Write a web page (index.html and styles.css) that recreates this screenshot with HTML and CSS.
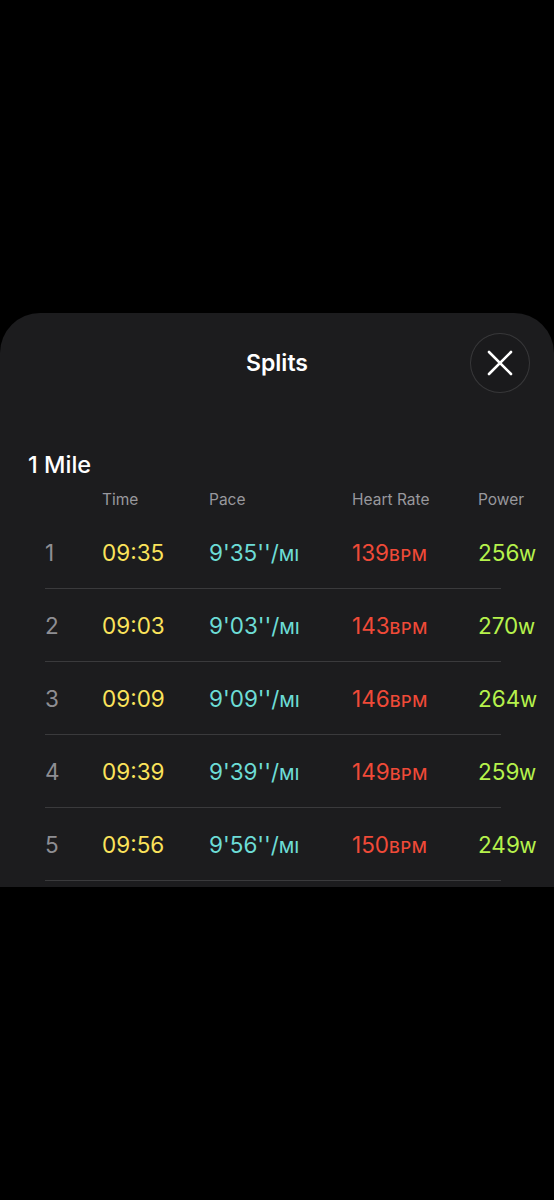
FILE: index.html
```html
<!DOCTYPE html>
<html lang="en">
<head>
  <title>Splits</title>
  <meta charset="UTF-8">
  <meta name="viewport" content="width=device-width, initial-scale=1">
  <link rel="stylesheet" href="styles.css">
</head>
<body>

  <div class="backdrop"></div>

  <div class="sheet">
    <div class="sheet-header">
      <span></span>
      <h1>Splits</h1>
      <button class="close-btn" aria-label="Close">
        <svg width="26" height="26" viewBox="0 0 26 26">
          <path d="M2 2 L24 24 M24 2 L2 24" stroke="#fff" stroke-width="2.6" stroke-linecap="round" fill="none"/>
        </svg>
      </button>
    </div>

    <h2 class="split-title">1 Mile</h2>

    <div class="splits">
      <div class="split-row head">
        <span></span>
        <span>Time</span>
        <span>Pace</span>
        <span>Heart Rate</span>
        <span>Power</span>
      </div>

      <div class="split-row">
        <span class="idx">1</span>
        <span class="time">09:35</span>
        <span class="pace">9'35''/<small>MI</small></span>
        <span class="hr">139<small>BPM</small></span>
        <span class="power">256<small>W</small></span>
      </div>
      <div class="split-row">
        <span class="idx">2</span>
        <span class="time">09:03</span>
        <span class="pace">9'03''/<small>MI</small></span>
        <span class="hr">143<small>BPM</small></span>
        <span class="power">270<small>W</small></span>
      </div>
      <div class="split-row">
        <span class="idx">3</span>
        <span class="time">09:09</span>
        <span class="pace">9'09''/<small>MI</small></span>
        <span class="hr">146<small>BPM</small></span>
        <span class="power">264<small>W</small></span>
      </div>
      <div class="split-row">
        <span class="idx">4</span>
        <span class="time">09:39</span>
        <span class="pace">9'39''/<small>MI</small></span>
        <span class="hr">149<small>BPM</small></span>
        <span class="power">259<small>W</small></span>
      </div>
      <div class="split-row">
        <span class="idx">5</span>
        <span class="time">09:56</span>
        <span class="pace">9'56''/<small>MI</small></span>
        <span class="hr">150<small>BPM</small></span>
        <span class="power">249<small>W</small></span>
      </div>
    </div>
  </div>

</body>
</html>
```

FILE: styles.css
```css
* {
  box-sizing: border-box;
}

body {
  margin: 0;
  background-color: #000;
  font-family: Inter, "Noto Sans", sans-serif;
  color: #fff;
  height: 1200px;
  overflow: hidden;
}

.backdrop {
  height: 313px;
}

.sheet {
  height: 574px;
  background-color: #1c1c1e;
  border-radius: 40px 40px 0 0;
  overflow: hidden;
}

.sheet-header {
  display: grid;
  grid-template-columns: 60px 1fr 60px;
  align-items: center;
  padding: 20px 24px 0 24px;
  height: 80px;
}

.sheet-header h1 {
  margin: 0;
  text-align: center;
  font-size: 23px;
  font-weight: 600;
  line-height: 60px;
}

.close-btn {
  width: 60px;
  height: 60px;
  border-radius: 50%;
  border: 1px solid rgba(255, 255, 255, 0.13);
  background-color: #1a1a1c;
  display: flex;
  align-items: center;
  justify-content: center;
  padding: 0;
}

.split-title {
  margin: 58px 0 0 28px;
  font-size: 23.5px;
  font-weight: 500;
  line-height: 28px;
}

.splits {
  margin: 11px 53px 0 45px;
}

.split-row {
  display: grid;
  grid-template-columns: 57px 107px 143px 126px 1fr;
  align-items: center;
  height: 73px;
  border-bottom: 1px solid #3a3a3c;
  font-size: 22.5px;
  white-space: nowrap;
}

.split-row.head {
  height: 26px;
  align-items: start;
  border-bottom: none;
  font-size: 15.5px;
  line-height: 20px;
  color: #98989d;
}

.split-row small {
  font-size: 16.5px;
  font-weight: 500;
  letter-spacing: 0.6px;
}

.idx {
  color: #8e8e93;
}

.time {
  color: #fbe35b;
}

.pace {
  color: #6ddcd6;
}

.hr {
  color: #f04a38;
}

.power {
  color: #b6f24c;
}
```
